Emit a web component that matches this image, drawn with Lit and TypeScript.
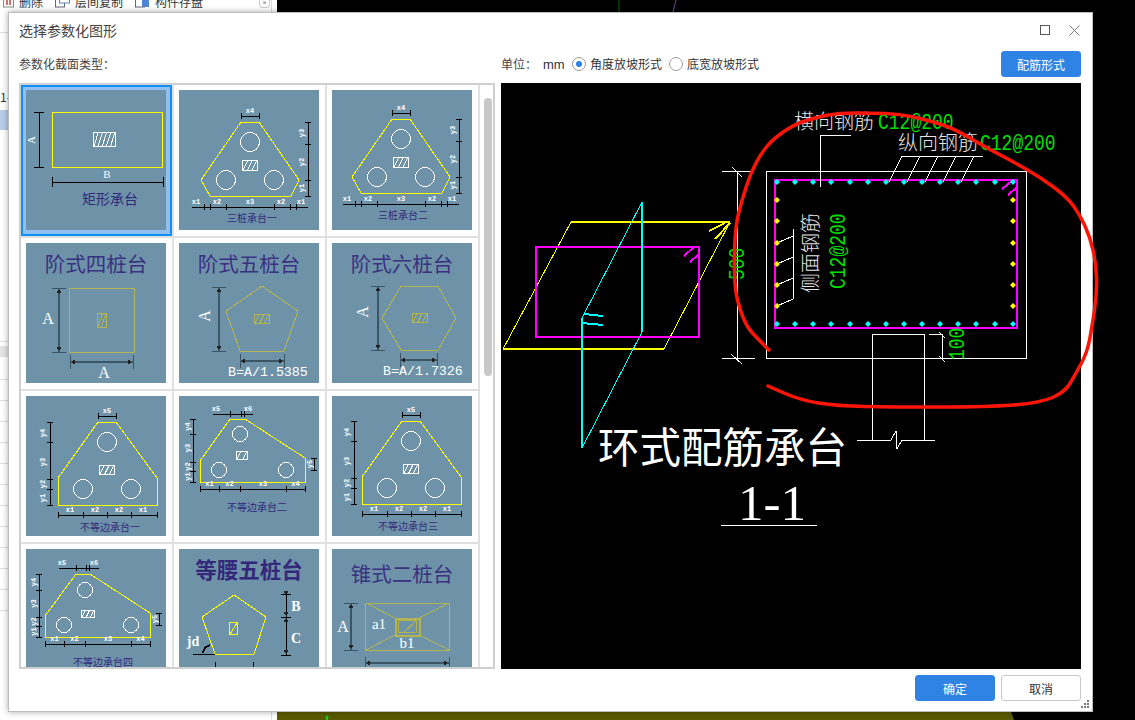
import { LitElement, html, css, svg } from "lit";
import { customElement } from "lit/decorators.js";

const Y = "#ffff00";
const OL = "#b4b450";
const DK = "#3c5565";

const ln = (x1: number, y1: number, x2: number, y2: number, c = "#000", w = 1) =>
  svg`<line x1=${x1} y1=${y1} x2=${x2} y2=${y2} stroke=${c} stroke-width=${w} />`;

const poly = (pts: number[][], c = Y, w = 1) =>
  svg`<polygon points=${pts.map((p) => p.join(",")).join(" ")} fill="none" stroke=${c} stroke-width=${w} />`;

const pile = (cx: number, cy: number, r = 9.5) =>
  svg`<circle cx=${cx} cy=${cy} r=${r} fill="none" stroke="#fff" />`;

// small hatched section mark in the middle of a cap
const hatch = (x: number, y: number, w: number, h: number, c = "#fff") => {
  const n = Math.max(2, Math.floor(w / 4));
  const rows = [];
  const run = Math.min(h * 0.5, w / n);
  for (let i = 0; i < n; i++) {
    const px = x + 1 + (i * (w - run - 1)) / (n - 1);
    rows.push(ln(px, y + h, px + run, y, c));
  }
  return svg`<rect x=${x} y=${y} width=${w} height=${h} fill="none" stroke=${c} />${rows}`;
};

const hdim = (y: number, xs: number[], t = 3, from?: number, to?: number) => svg`
  ${ln(from ?? xs[0], y, to ?? xs[xs.length - 1], y, "#000", 1)}
  ${xs.map((x) => ln(x, y - t, x, y + t))}`;

const vdim = (x: number, ys: number[], t = 3) => svg`
  ${ln(x, ys[0], x, ys[ys.length - 1], "#000", 1)}
  ${ys.map((y) => ln(x - t, y, x + t, y))}`;

const lab = (x: number, y: number, t: string, rot = false) => svg`
  <text class="lab" x=${x} y=${y} text-anchor="middle" dominant-baseline="central"
    transform=${rot ? `rotate(-90 ${x} ${y})` : ""}>${t}</text>`;

const cap = (x: number, y: number, t: string) =>
  svg`<text class="cap" x=${x} y=${y} text-anchor="middle" dominant-baseline="central">${t}</text>`;

const title = (y: number, t: string, bold = false) =>
  svg`<text class=${bold ? "ttl bold" : "ttl"} x="70" y=${y} text-anchor="middle">${t}</text>`;

const big = (x: number, y: number, t: string, rot = false, size = 16) => svg`
  <text class="big" style="font-size:${size}px" x=${x} y=${y} text-anchor="middle" dominant-baseline="central"
    transform=${rot ? `rotate(-90 ${x} ${y})` : ""}>${t}</text>`;

const arrV = (x: number, y: number, up: boolean) =>
  svg`<polygon points="${x - 2.5},${y + (up ? 4 : -4)} ${x + 2.5},${y + (up ? 4 : -4)} ${x},${y}" fill="#222" />`;
const arrH = (x: number, y: number, left: boolean) =>
  svg`<polygon points="${x + (left ? 4 : -4)},${y - 2.5} ${x + (left ? 4 : -4)},${y + 2.5} ${x},${y}" fill="#222" />`;

const dkV = (x: number, y1: number, y2: number) => svg`
  ${ln(x, y1, x, y2, DK, 2)}${ln(x - 7, y1, x + 7, y1, DK)}${ln(x - 7, y2, x + 7, y2, DK)}
  ${arrV(x, y1 + 1, true)}${arrV(x, y2 - 1, false)}`;
const dkH = (y: number, x1: number, x2: number, t = 7) => svg`
  ${ln(x1, y, x2, y, DK, 2)}${ln(x1, y - t, x1, y + t, DK, 1)}${ln(x2, y - t, x2, y + t, DK, 1)}
  ${arrH(x1 + 1, y, true)}${arrH(x2 - 1, y, false)}`;

const threePile = (dx: number, dy: number, caption: string, capY: number) => svg`
  <g transform="translate(${dx} ${dy})">
    ${poly([[62, 32], [80, 32], [120, 90], [112, 106], [31, 106], [22, 90]])}
    ${pile(71, 52)}${pile(47, 90)}${pile(95, 90)}
    ${hatch(63, 70, 15, 10)}
    ${hdim(26, [62, 80])}${lab(71, 21, "x4")}
    ${vdim(129, [32, 54, 90, 106])}
    ${lab(123, 43, "y3", true)}${lab(123, 72, "y2", true)}${lab(123, 98, "y1", true)}
    ${hdim(117, [25, 31, 47, 95, 111, 117], 3, 13, 129)}
    ${lab(17, 112, "x1")}${lab(38, 112, "x2")}${lab(71, 112, "x3")}${lab(102, 112, "x2")}${lab(122, 112, "x1")}
  </g>
  ${cap(73 + dx, capY, caption)}`;

const unequal = (dx: number, dy: number, caption: string, capX: number, capY: number) => svg`
  <g transform="translate(${dx} ${dy})">
    ${poly([[72, 26], [90, 26], [131, 82], [131, 109], [32, 109], [32, 82]])}
    ${pile(81, 46)}${pile(57, 93)}${pile(105, 93)}
    ${hatch(73, 69, 15, 9)}
    ${hdim(20, [72, 90])}${lab(81, 15, "x5")}
    ${vdim(24, [26, 46, 83, 93, 109])}
    ${lab(17, 37, "y4", true)}${lab(17, 66, "y3", true)}${lab(17, 88, "y2", true)}${lab(17, 102, "y1", true)}
    ${hdim(119, [32, 57, 81, 105, 131])}
    ${lab(44, 114, "x1")}${lab(69, 114, "x2")}${lab(93, 114, "x2")}${lab(117, 114, "x1")}
  </g>
  ${cap(capX, capY, caption)}`;

type Skew = {
  pts: number[][]; piles: number[][]; h: number[]; top: number[]; topY: number; left: number[]; leftX: number;
  right: number[]; rightX: number; bottom: number[]; bottomY: number; capX: number; capY: number; caption: string;
};

const skewed = (s: Skew) => svg`
  ${poly(s.pts)}
  ${s.piles.map((p) => pile(p[0], p[1], 7.5))}
  ${hatch(s.h[0], s.h[1], s.h[2], s.h[3])}
  ${hdim(s.topY, s.top.slice(1, 3), 3, s.top[0], s.top[3])}
  ${ln(s.top[2] + 3, s.topY - 3, s.top[2] + 3, s.topY + 3)}
  ${lab(s.top[0] + 3, s.topY - 5, "x5")}${lab(s.top[3] - 5, s.topY - 5, "x6")}
  ${vdim(s.leftX, s.left)}
  ${lab(s.leftX - 5, (s.left[0] + s.left[1]) / 2, "y4", true)}${lab(s.leftX - 5, (s.left[1] + s.left[2]) / 2, "y3", true)}
  ${lab(s.leftX - 5, (s.left[2] + s.left[3]) / 2, "y2", true)}${lab(s.leftX - 5, (s.left[3] + s.left[4]) / 2, "y1", true)}
  ${vdim(s.rightX, s.right)}${lab(s.rightX - 4, (s.right[0] + s.right[1]) / 2, "y5", true)}
  ${hdim(s.bottomY, s.bottom)}
  ${lab((s.bottom[0] + s.bottom[1]) / 2, s.bottomY - 5, "x1")}${lab((s.bottom[1] + s.bottom[2]) / 2, s.bottomY - 5, "x2")}
  ${lab((s.bottom[2] + s.bottom[3]) / 2, s.bottomY - 5, "x3")}${lab((s.bottom[3] + s.bottom[4]) / 2, s.bottomY - 5, "x4")}
  ${cap(s.capX, s.capY, s.caption)}`;

const THUMBS = [
  svg`
    <rect x="26.5" y="22.5" width="110" height="55" fill="none" stroke=${Y} />
    ${hatch(67, 42, 22, 14)}
    ${vdim(13, [22, 77], 5)}${big(5, 50, "A", true, 11)}
    ${hdim(92, [26, 137], 5)}${big(81, 84, "B", false, 11)}
    <text class="cap" style="font-size:14px" x="84" y="108" text-anchor="middle" dominant-baseline="central">矩形承台</text>`,
  threePile(0, 0, "三桩承台一", 127),
  threePile(-2, -3, "三桩承台二", 124),
  svg`
    ${title(29, "阶式四桩台")}
    <rect x="43.5" y="45.5" width="65" height="64" fill="none" stroke=${OL} />
    ${hatch(71, 70, 9, 14, OL)}
    ${dkV(33, 45, 109)}${big(22, 75, "A")}
    ${dkH(119, 44, 107)}${big(78, 129, "A")}`,
  svg`
    ${title(29, "阶式五桩台")}
    ${poly([[83, 43], [119, 68], [105, 108], [61, 108], [47, 68]], OL)}
    ${hatch(75, 71, 15, 9, OL)}
    ${dkV(40, 44, 108)}${big(25, 73, "A", true)}
    ${dkH(118, 61, 105)}
    <text class="mono" x="49" y="133">B=A/1.5385</text>`,
  svg`
    ${title(29, "阶式六桩台")}
    ${poly([[69, 43], [106, 43], [124, 75], [106, 107], [69, 107], [50, 75]], OL)}
    ${hatch(80, 70, 15, 9, OL)}
    ${dkV(46, 43, 107)}${big(30, 69, "A", true)}
    ${dkH(117, 68, 105)}
    <text class="mono" x="51" y="132">B=A/1.7326</text>`,
  unequal(0, 0, "不等边承台一", 84, 130),
  skewed({
    pts: [[51, 23], [66, 23], [126, 62], [126, 86], [21, 86], [21, 65]], piles: [[61, 38], [40, 74], [107, 74]],
    h: [57, 55, 11, 8], top: [34, 51, 62, 74], topY: 18, left: [23, 38, 66, 75, 86], leftX: 14,
    right: [62, 74], rightX: 135, bottom: [21, 40, 61, 107, 126], bottomY: 93, capX: 78, capY: 110, caption: "不等边承台二",
  }),
  unequal(-2, -1, "不等边承台三", 76, 129),
  skewed({
    pts: [[50, 25], [64, 25], [124, 64], [124, 88], [19, 88], [19, 67]], piles: [[59, 41], [38, 76], [105, 76]],
    h: [55, 61, 13, 7], top: [33, 50, 60, 73], topY: 19, left: [25, 41, 68, 77, 88], leftX: 13,
    right: [64, 76], rightX: 133, bottom: [19, 38, 59, 105, 124], bottomY: 95, capX: 77, capY: 112, caption: "不等边承台四",
  }),
  svg`
    ${title(29, "等腰五桩台", true)}
    ${poly([[55, 46], [87, 68], [75, 105], [36, 105], [23, 68]])}
    <rect x="50.5" y="73.5" width="8" height="12" fill="none" stroke=${Y} />${ln(51, 85, 58, 74, Y)}
    ${vdim(107, [45, 68, 106], 5)}
    ${arrV(107, 46, false)}${arrV(107, 67, false)}${arrV(107, 69, true)}${arrV(107, 105, false)}
    <text class="bserif" x="117" y="62" text-anchor="middle">B</text>
    <text class="bserif" x="117" y="94" text-anchor="middle">C</text>
    <text class="bserif" x="14" y="97" text-anchor="middle">jd</text>
    ${ln(14, 105, 36, 105)}
    <path d="M24 104 Q25 98 31 96" fill="none" stroke="#000" stroke-width="2" />
    ${ln(36, 113, 36, 125)}${ln(74, 113, 74, 125)}${ln(38, 118, 41, 118)}${ln(67, 118, 71, 118)}`,
  svg`
    ${title(33, "锥式二桩台")}
    <rect x="33.5" y="54.5" width="84" height="47" fill="none" stroke=${OL} />
    <rect x="63.5" y="69.5" width="24" height="17" fill="none" stroke=${OL} stroke-width="2" />
    <rect x="66.5" y="71.5" width="18" height="12" fill="none" stroke=${OL} />
    ${ln(34, 54, 63, 69, OL)}${ln(117, 54, 87, 69, OL)}${ln(34, 101, 63, 86, OL)}${ln(117, 101, 87, 86, OL)}
    ${ln(72, 83, 84, 72, OL)}
    ${dkV(19, 54, 101)}${big(11, 77, "A")}
    ${big(47, 75, "a1", false, 15)}${big(75, 94, "b1", false, 15)}
    ${dkH(114, 33, 117, 6)}`,
];

// the hand drawn ring around the section, in page coordinates
const RED = [
  [769, 350], [757, 338], [747, 327], [740, 310], [735, 290], [734, 257], [736, 223], [742, 200], [750, 175], [760, 155],
  [772, 140], [793, 125], [817, 117], [840, 113], [870, 113], [900, 114], [927, 120], [953, 128], [987, 148], [1010, 160],
  [1040, 177], [1067, 197], [1080, 215], [1090, 237], [1096, 263], [1097, 293], [1092, 327], [1087, 353], [1075, 375],
  [1065, 392], [1040, 403], [987, 407], [893, 407], [837, 406], [800, 400], [768, 386],
];

const smooth = (p: number[][]) => {
  let d = `M${p[0][0]} ${p[0][1]}`;
  for (let i = 1; i < p.length - 1; i++) {
    const mx = (p[i][0] + p[i + 1][0]) / 2;
    const my = (p[i][1] + p[i + 1][1]) / 2;
    d += ` Q${p[i][0]} ${p[i][1]} ${mx} ${my}`;
  }
  const last = p[p.length - 1];
  return `${d} L${last[0]} ${last[1]}`;
};

const REBAR_X = [172, 226, 280, 334, 391, 445, 499, 553, 607, 661, 715, 769, 826, 880].map((z) => Math.round(z / 3 + 720));
const SIDE_Y = [200, 221, 243, 264, 285, 306];

const dot = (x: number, y: number, c: string) =>
  svg`<polygon points="${x},${y - 3} ${x + 3},${y} ${x},${y + 3} ${x - 3},${y}" fill=${c} />`;

// green CAD numbers are narrow and tall, so stretch the mono face a little
const num = (x: number, y: number, t: string, rot = false) => svg`
  <text class="num" x="0" y="0" transform="translate(${x} ${y}) ${rot ? "rotate(-90)" : ""} scale(1 1.2)">${t}</text>`;

const W = "#fff";
const CY = "#00ffff";
const MG = "#ff00ff";

const drawing = svg`
  <g shape-rendering="crispEdges">
    ${ln(571, 222, 730, 222, Y, 2)}${ln(503, 349, 664, 349, Y, 2)}${ln(571, 222, 503, 349, Y)}${ln(730, 222, 664, 349, Y)}
    ${ln(709, 231, 725, 223, Y, 2)}${ln(715, 239, 730, 223, Y, 2)}
    <rect x="536" y="247" width="163" height="90" fill="none" stroke=${MG} stroke-width="2" />
    ${ln(684, 256, 694, 247, MG, 2)}${ln(690, 262, 699, 254, MG, 2)}
    ${ln(642, 202, 642, 332, CY, 2)}${ln(642, 202, 582, 318, CY)}${ln(582, 318, 582, 448, CY, 2)}${ln(582, 448, 642, 332, CY)}
    ${ln(584, 314, 603, 316, CY, 2)}${ln(582, 323, 603, 325, CY, 2)}

    ${ln(737, 171, 737, 358, W)}${ln(722, 171, 752, 171, W)}${ln(722, 358, 755, 358, W)}
    ${ln(732, 167, 742, 177, W)}${ln(731, 354, 742, 364, W)}
    <rect x="766.5" y="171.5" width="260" height="187" fill="none" stroke=${W} />
    <rect x="775" y="180" width="242" height="148" fill="none" stroke=${MG} stroke-width="2" />
    ${ln(1002, 189, 1013, 180, MG, 2)}${ln(1008, 195, 1017, 187, MG, 2)}

    ${ln(820, 187, 820, 135, W)}${ln(820, 135, 851, 135, W)}
    ${ln(902, 156, 983, 156, W)}
    ${[902, 920, 938, 956, 974].map((x) => ln(x, 156, x - 13, 182, W))}
    ${ln(793, 229, 793, 299, W)}
    ${[236, 257, 278, 299].map((y) => ln(793, y, 777, y + 7, W))}

    ${ln(872, 334, 924, 334, W)}${ln(872, 334, 872, 440, W)}${ln(924, 334, 924, 440, W)}
    <polyline points="857,440 891,440 896,431 897,449 902,440 935,440" fill="none" stroke=${W} />
    ${ln(929, 334, 942, 334, W)}${ln(942, 334, 942, 358, W)}${ln(939, 332, 945, 338, W)}${ln(939, 356, 945, 362, W)}
    ${ln(721, 525, 817, 525, W)}
  </g>
  ${REBAR_X.map((x) => svg`${dot(x, 182, CY)}${dot(x, 324, CY)}`)}
  ${SIDE_Y.map((y) => svg`${dot(777, y, Y)}${dot(1013, y, Y)}`)}

  <text class="cn" x="794" y="129">横向钢筋</text>
  ${num(878, 129, "C12@200")}
  <text class="cn" x="898" y="150">纵向钢筋</text>
  ${num(980, 150, "C12@200")}
  <text class="cn" x="0" y="0" transform="translate(818 293) rotate(-90)">侧面钢筋</text>
  ${num(845, 289, "C12@200", true)}
  ${num(744, 280, "500", true)}
  ${num(964, 360, "100", true)}
  <text class="head" x="598" y="463">环式配筋承台</text>
  <text class="sect" x="772" y="520" text-anchor="middle">1-1</text>

  <path d=${smooth(RED)} fill="none" stroke="#ff1408" stroke-width="3.5" stroke-linecap="round" />
`;

@customElement("app-root")
export class AppRoot extends LitElement {
  static styles = css`
    :host {
      display: block;
      position: relative;
      width: 1135px;
      height: 720px;
      overflow: hidden;
      background: #fff;
      font-family: "Noto Sans CJK SC", "Liberation Sans", sans-serif;
    }

    * {
      box-sizing: border-box;
    }

    .desktop {
      display: flex;
      height: 720px;
    }

    .side {
      width: 272px;
      border-right: 1px solid #ddd;
      display: grid;
      grid-template-rows: 8px 25px 54px 23px 20px 212px 4px 11px 23px repeat(11, 21px);
      flex: none;
    }

    .tools {
      display: flex;
      align-items: flex-end;
      gap: 12px;
      padding-left: 3px;
      overflow: hidden;
      font-size: 12px;
      line-height: 12px;
      color: #333;
    }

    .tool {
      display: flex;
      gap: 4px;
      align-items: flex-end;
    }

    .more {
      margin-left: auto;
      margin-right: 1px;
      width: 11px;
      height: 9px;
      border: 1px solid #ccc;
      border-top: 0;
      border-radius: 0 0 4px 4px;
      font-size: 8px;
      line-height: 5px;
      text-align: center;
      color: #555;
    }

    .line {
      border-bottom: 1px solid #ddd;
    }

    .num-cell {
      font-size: 12px;
      line-height: 20px;
      color: #333;
      white-space: nowrap;
    }

    .picked {
      background: #b8cde8;
    }

    .bar {
      background: #e4e4e4;
    }

    .stage {
      flex: 1;
      margin-left: 5px;
      background: #000;
    }

    .stage svg {
      display: block;
    }

    .dialog {
      position: absolute;
      left: 8px;
      top: 12px;
      width: 1085px;
      height: 700px;
      background: #fff;
      border: 1px solid #bdbdbd;
      box-shadow: 0 0 6px rgba(0, 0, 0, 0.35);
      padding: 0 11px 0 10px;
      display: flex;
      flex-direction: column;
    }

    .head-row {
      height: 38px;
      display: flex;
      align-items: center;
      padding-bottom: 3px;
      font-size: 14px;
      color: #444;
    }

    .head-row span {
      flex: 1;
      line-height: 35px;
    }

    .win {
      display: flex;
      gap: 18px;
      padding-right: 1px;
    }

    .win svg {
      display: block;
    }

    .body {
      display: grid;
      grid-template-columns: 476px 580px;
      grid-template-rows: 26px 586px;
      column-gap: 6px;
      row-gap: 6px;
    }

    .field {
      display: flex;
      align-items: center;
      font-size: 12px;
      color: #444;
      padding-bottom: 1px;
    }

    .opts {
      display: flex;
      align-items: center;
      font-size: 12px;
      color: #333;
    }

    .unit {
      width: 42px;
      color: #444;
      padding-bottom: 1px;
    }

    .mm {
      width: 29px;
      font-family: "Liberation Sans", sans-serif;
      font-size: 13px;
    }

    .radio {
      width: 14px;
      height: 14px;
      border: 1px solid #999;
      border-radius: 50%;
      margin-right: 4px;
      display: flex;
      align-items: center;
      justify-content: center;
    }

    .radio.on::after {
      content: "";
      width: 6px;
      height: 6px;
      border-radius: 50%;
      background: #2f83e4;
    }

    .radio-label {
      margin-right: 7px;
      padding-bottom: 1px;
    }

    .btn {
      height: 26px;
      width: 80px;
      border-radius: 3px;
      border: 1px solid #c8c8c8;
      background: #fff;
      color: #333;
      font: inherit;
      font-size: 12px;
      padding: 0;
    }

    .btn.primary {
      background: #2f83e4;
      border-color: #2f83e4;
      color: #fff;
    }

    .opts .btn {
      margin-left: auto;
    }

    .list {
      border: 2px solid #cfcfcf;
      overflow: hidden;
      display: flex;
    }

    .grid {
      display: grid;
      grid-template-columns: repeat(3, 153px);
      grid-auto-rows: 153px;
      flex: none;
      width: 459px;
    }

    .cell {
      padding: 5px 5px 4px 5px;
      border-right: 2px solid #e0e0e0;
      border-bottom: 2px solid #e0e0e0;
      height: 153px;
    }

    .cell.sel {
      background: #90c0f0;
      background-clip: padding-box;
      box-shadow: inset 0 0 0 2px #0f90ff;
    }

    .cell svg {
      display: block;
      background: #6e93a9;
    }

    .scroll {
      flex: 1;
      padding: 13px 2px 0 3px;
    }

    .thumb {
      width: 8px;
      height: 278px;
      margin-left: 1px;
      border-radius: 4px;
      background: #c8c8c8;
    }

    .canvas {
      background: #000;
    }

    .canvas svg {
      display: block;
      overflow: visible;
      position: relative;
    }

    .foot {
      display: flex;
      justify-content: flex-end;
      gap: 6px;
      margin-top: 6px;
    }

    .grip {
      position: absolute;
      right: 2px;
      bottom: 2px;
      display: block;
    }

    .lab {
      font: bold 7px "Liberation Mono", monospace;
      fill: #fff;
    }

    .cap {
      font: 10px "Noto Sans CJK SC", sans-serif;
      fill: #33287a;
    }

    .ttl {
      font: 20.5px "Noto Sans CJK SC", sans-serif;
      fill: #3a3180;
    }

    .ttl.bold {
      font-weight: 700;
      font-size: 21.5px;
      fill: #33287a;
    }

    .big {
      font-family: "Liberation Serif", serif;
      fill: #fff;
    }

    .mono {
      font: 13.3px "Liberation Mono", monospace;
      fill: #fff;
    }

    .bserif {
      font: bold 14px "Liberation Serif", serif;
      fill: #fff;
    }

    .cn {
      font: 300 20px "Noto Sans CJK SC", sans-serif;
      fill: #e4e4e4;
    }

    .num {
      font: 18px "Liberation Mono", monospace;
      fill: #00e000;
    }

    .head {
      font: 41.5px "Noto Sans CJK SC", sans-serif;
      fill: #fff;
    }

    .sect {
      font: 51px "Liberation Serif", serif;
      fill: #fff;
    }
  `;

  render() {
    return html`
      <div class="desktop">
        <div class="side">
          <div class="tools">
            <div class="tool">
              <svg width="12" height="10" viewBox="0 0 12 10">
                <rect x="0.5" y="-4" width="10" height="13" fill="#fff" stroke="#888" />
                <path d="M4 0V7M7 0V7" stroke="#d04030" stroke-width="1.5" />
              </svg>
              <span>删除</span>
            </div>
            <div class="tool">
              <svg width="16" height="10" viewBox="0 0 16 10">
                <rect x="0.5" y="-4" width="9" height="13" fill="#fff" stroke="#667" />
                <rect x="4.5" y="-6" width="10" height="11" fill="#fff" stroke="#5b80b8" />
              </svg>
              <span>层间复制</span>
            </div>
            <div class="tool">
              <svg width="16" height="10" viewBox="0 0 16 10">
                <rect x="0.5" y="-4" width="9" height="13" fill="#fff" stroke="#667" />
                <rect x="7" y="2" width="7" height="7" fill="#4d86d6" />
              </svg>
              <span>构件存盘</span>
            </div>
            <div class="more">»</div>
          </div>
          <div class="line"></div>
          <div></div>
          <div class="num-cell">1-</div>
          <div class="picked"></div>
          <div class="line"></div>
          <div></div>
          <div class="bar"></div>
          <div class="line"></div>
          ${Array.from({ length: 11 }, () => html`<div class="line"></div>`)}
        </div>
        <div class="stage">
          <svg width="858" height="720" viewBox="277 0 858 720">
            <polygon points="277,712 1011,712 1014,720 277,720" fill="#5a5a00" />
            <line x1="619" y1="0" x2="619" y2="12" stroke="#0a6a0a" />
            <line x1="676" y1="0" x2="673" y2="12" stroke="#6a4a9a" />
            <polygon points="327,715 329,718 328,718 328,720 326,720 326,718 325,718" fill="#19d219" />
          </svg>
        </div>
      </div>

      <div class="dialog">
        <div class="head-row">
          <span>选择参数化图形</span>
          <div class="win">
            <svg width="11" height="11" viewBox="0 0 11 11">
              <rect x="0.5" y="0.5" width="9" height="9" fill="none" stroke="#555" />
            </svg>
            <svg width="11" height="11" viewBox="0 0 11 11">
              <path d="M0.5 0.5L10.5 10.5M10.5 0.5L0.5 10.5" stroke="#777" />
            </svg>
          </div>
        </div>
        <div class="body">
          <div class="field">参数化截面类型：</div>
          <div class="opts">
            <span class="unit">单位：</span>
            <span class="mm">mm</span>
            <span class="radio on"></span><span class="radio-label">角度放坡形式</span>
            <span class="radio"></span><span class="radio-label">底宽放坡形式</span>
            <button class="btn primary">配筋形式</button>
          </div>
          <div class="list">
            <div class="grid">
              ${THUMBS.map(
                (t, i) => html`
                  <div class=${i === 0 ? "cell sel" : "cell"}>
                    <svg width="140" height="140" viewBox="0 0 140 140" shape-rendering="crispEdges">${t}</svg>
                  </div>
                `
              )}
            </div>
            <div class="scroll"><div class="thumb"></div></div>
          </div>
          <div class="canvas">
            <svg width="580" height="586" viewBox="501 83 580 586">${drawing}</svg>
          </div>
        </div>
        <div class="foot">
          <button class="btn primary">确定</button>
          <button class="btn">取消</button>
        </div>
        <svg class="grip" width="9" height="9" viewBox="0 0 9 9" fill="#777">
          <rect x="6" y="0" width="2" height="2" />
          <rect x="3" y="3" width="2" height="2" /><rect x="6" y="3" width="2" height="2" />
          <rect x="0" y="6" width="2" height="2" /><rect x="3" y="6" width="2" height="2" /><rect x="6" y="6" width="2" height="2" />
        </svg>
      </div>
    `;
  }
}
